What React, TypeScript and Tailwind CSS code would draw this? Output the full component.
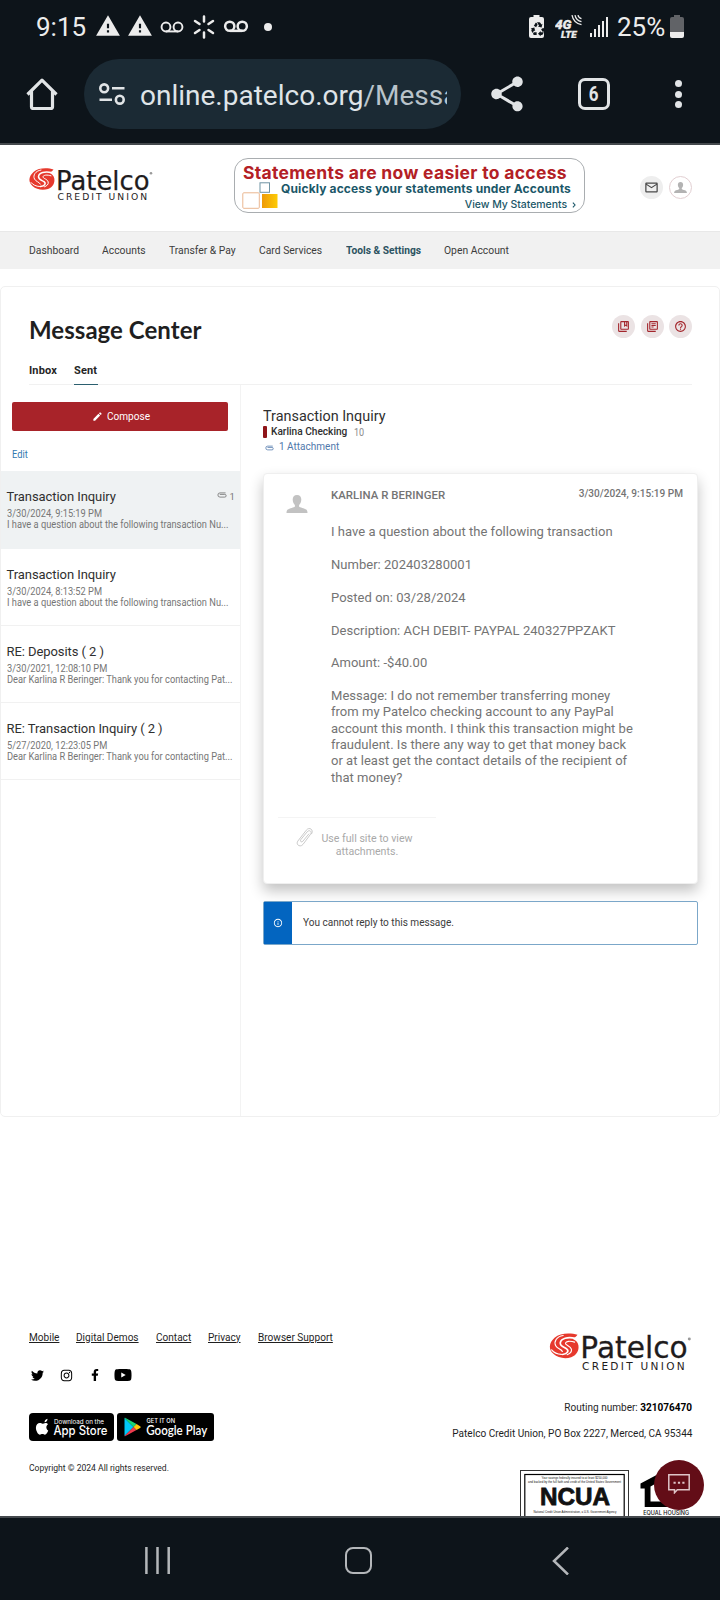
import React from 'react';
import { MdMailOutline, MdOutlineCollectionsBookmark, MdOutlineLibraryBooks, MdHelpOutline, MdInfoOutline, MdShare, MdWarning, MdEdit, MdRecycling } from 'react-icons/md';
import { FaTwitter, FaInstagram, FaFacebookF, FaYoutube } from 'react-icons/fa';

function Person({ className }: { className: string }) {
  return (
    <svg viewBox="0 0 21 18" className={className} fill="currentColor">
      <path d="M10.5 0C7.6 0 6.2 2 6.2 4.6c0 2.3 1 4.4 2.2 5.3v1.6C7.9 12.6 3 13.2 1.2 14.6.3 15.3 0 16.6 0 18h21c0-1.4-.3-2.7-1.2-3.4-1.8-1.4-6.7-2-7.2-3.1V9.9c1.200-.9 2.200-3 2.200-5.300C14.800 2 13.400 0 10.500 0z" />
    </svg>
  );
}

function Clip({ className }: { className: string }) {
  return (
    <svg viewBox="0 0 10 6" className={className} fill="none" stroke="currentColor" strokeWidth="0.85" strokeLinecap="round">
      <path d="M8.200.9H3a2.100 2.100 0 0 0 0 4.200h4.800a1.350 1.350 0 0 0 0-2.700H3.200" />
    </svg>
  );
}

function PatelcoLogo({ className }: { className: string }) {
  return (
    <svg viewBox="0 0 124 34" className={className} overflow="visible">
      <path d="M24.500 2.500C19 .8 9.500.5 4.500 5-1 10-.5 15.500 3.500 19c4 3.600 10 4.800 15.500 3 5-2 7-6 6.300-10.500-.5-3-2.600-4.500-4.800-5.500 1.500-.8 3-2 4-3.500z" fill="#e6392d" />
      <g fill="none" stroke="#fff" strokeLinecap="round">
        <path d="M22.500 5.500C16 4 10 5.500 9.500 9.500c-.3 3 3.500 3.700 5.500 5.200 2.200 1.700 1 4.300-3.500 4.900" strokeWidth="1.500" />
        <path d="M22 8.800c-4-1.300-7.500-.8-8 .9-.4 1.700 4.500 2.300 5.200 5.300.5 2.400-1.400 4-3.700 4.800" strokeWidth="1" />
        <path d="M12 3C6 4 3.800 8.500 5.500 12c1.400 2.800 5 3 5.800 5" strokeWidth="1" />
        <path d="M2 15.500c2 2.500 5 3.800 8.500 4" strokeWidth="1" />
      </g>
      <text x="27" y="22.500" fontSize="26.500" textLength="93.500" lengthAdjust="spacingAndGlyphs" fontFamily="DejaVu Sans, sans-serif" fill="#1f1c1d" stroke="#1f1c1d" strokeWidth=".25">Patelco</text>
      <text x="28.500" y="32.800" fontSize="9.200" textLength="89.500" lengthAdjust="spacing" fontFamily="DejaVu Sans, sans-serif" fill="#1f1c1d">CREDIT UNION</text>
      <circle cx="122" cy="6.200" r="1.300" fill="#999" />
    </svg>
  );
}

function Voicemail({ className, w }: { className: string; w: number }) {
  return (
    <svg viewBox="0 0 26 13" className={className} fill="none" stroke="#ececec" strokeWidth={w}>
      <circle cx="6.500" cy="6.500" r="4.800" />
      <circle cx="19.500" cy="6.500" r="4.800" />
      <path d="M6.500 11.300h13" />
    </svg>
  );
}

function StatusBar() {
  return (
    <div className="flex h-[52px] items-center pt-px pl-[36px] pr-[36px] text-[#ececec]">
      <span className="w-[59px] text-[26px] leading-none">9:15</span>
      <MdWarning className="mr-[6px] size-[26px] -translate-y-px" />
      <MdWarning className="mr-[6px] size-[26px] -translate-y-px" />
      <Voicemail className="mr-[9px] ml-px h-[12px] w-[24px]" w={2.1} />
      <svg viewBox="0 0 22 24" className="mr-[8px] h-[24px] w-[22px]" stroke="#ececec" strokeWidth="2.500" strokeLinecap="round">
        <path d="M11 1.500v5M11 17.500v5M2 6l4.500 3M15.500 15l4.500 3M20 6l-4.500 3M6.500 15L2 18" />
      </svg>
      <Voicemail className="h-[12.500px] w-[26px]" w={2.6} />
      <span className="ml-[15px] size-[8px] rounded-full bg-[#ececec]" />
      <span className="grow" />
      <svg viewBox="0 0 15 23" className="h-[23px] w-[15px]" fill="#ececec">
        <path d="M4.500 0h6v2H13a2 2 0 0 1 2 2v17a2 2 0 0 1-2 2H2a2 2 0 0 1-2-2V4a2 2 0 0 1 2-2h2.500z" />
        <MdRecycling x="1" y="6" width="13" height="13" color="#0d141a" />
      </svg>
      <svg viewBox="0 0 28 24" className="mr-px ml-[11px] h-[24px] w-[28px] -translate-y-px" fill="#ececec" stroke="#ececec" strokeWidth=".3">
        <text x="0" y="15" fontSize="12.500" fontWeight="900" fontStyle="italic" fontFamily="Roboto, sans-serif" textLength="16.500" lengthAdjust="spacingAndGlyphs">4G</text>
        <text x="6" y="23.500" fontSize="9" fontWeight="900" fontStyle="italic" fontFamily="Roboto, sans-serif" textLength="15.500" lengthAdjust="spacingAndGlyphs">LTE</text>
        <g fill="none" stroke="#ececec" strokeWidth="1.300">
          <path d="M17 1.200q1.500 8 9.500 9.500M20 1.200q1 5.500 6.500 6.500M23 1.200q.6 2.800 3.500 3.500" />
        </g>
      </svg>
      <svg viewBox="0 0 18 20" className="ml-[6px] h-[20px] w-[18px]" fill="#ececec">
        <path d="M0 16h2v4H0zM4 12h2v8H4zM8 8h2v12H8zM12 4h2v16h-2zM16 0h2v20h-2z" />
      </svg>
      <span className="ml-[9px] w-[53px] text-[26px] leading-none">25%</span>
      <svg viewBox="0 0 14 23" className="h-[23px] w-[14px]">
        <path d="M4 0h6v2h2a2 2 0 0 1 2 2v13H0V4a2 2 0 0 1 2-2h2z" fill="#616367" />
        <path d="M0 17h14v4a2 2 0 0 1-2 2H2a2 2 0 0 1-2-2z" fill="#ececec" />
      </svg>
    </div>
  );
}

function Toolbar() {
  return (
    <div className="flex h-[91px] items-center pr-[36px] pb-[7px] pl-[26px] text-[#e1e4e6]">
      <svg viewBox="0 0 32 32" className="h-[32px] w-[32px]" fill="none" stroke="currentColor" strokeWidth="3.200" strokeLinejoin="round">
        <path d="M1.500 16.500L16 2.200l14.500 14.300M5.500 13.500V29a1.500 1.500 0 0 0 1.500 1.500h18a1.500 1.500 0 0 0 1.500-1.500V13.500" />
      </svg>
      <div className="ml-[26px] flex h-[70px] w-[377px] items-center rounded-full bg-[#1b2a34] pl-[15px]">
        <svg viewBox="0 0 26 22" className="h-[22px] w-[26px]" fill="none" stroke="currentColor" strokeWidth="2.600">
          <circle cx="5.200" cy="5.300" r="3.900" />
          <circle cx="20.800" cy="16.700" r="3.900" />
          <path d="M13 5.300h12.500M.5 16.700H13" />
        </svg>
        <div className="mt-[3px] ml-[15px] w-[307px] overflow-hidden whitespace-nowrap text-[28px] leading-[36px] text-[#dfe4e8]">
          online.patelco.org<span className="text-[#b9c3ca]">/Message</span>
        </div>
      </div>
      <MdShare className="ml-[25px] size-[42px]" />
      <div className="ml-[50px] flex size-[32px] items-center justify-center rounded-[7px] border-[3px] border-current text-[20px] font-bold">
        <span className="scale-x-[0.85]">6</span>
      </div>
      <div className="ml-auto mr-[2px] flex flex-col gap-[3.500px]">
        <span className="size-[7px] rounded-full bg-current" />
        <span className="size-[7px] rounded-full bg-current" />
        <span className="size-[7px] rounded-full bg-current" />
      </div>
    </div>
  );
}

function Banner() {
  return (
    <div className="mt-[13px] ml-[81px] flex h-[55px] w-[351px] flex-col rounded-[14px] border border-[#a9adb0] font-['Inter'] whitespace-nowrap">
      <div className="mt-[4px] ml-[8px] text-[17.500px] leading-[19px] font-bold tracking-[0.31px] text-[#b32025]">Statements are now easier to access</div>
      <div className="flex">
        <svg viewBox="0 0 36 28" className="ml-[7px] h-[28px] w-[36px]">
          <rect x="18" y=".8" width="9.500" height="9.500" fill="#fff" stroke="#6f93a3" />
          <rect x=".8" y="10.800" width="16.500" height="15.500" rx="1" fill="#fff" stroke="#eab791" />
          <defs>
            <linearGradient id="gold">
              <stop offset="0" stopColor="#ee9a08" />
              <stop offset="1" stopColor="#fdcb06" />
            </linearGradient>
          </defs>
          <rect x="20" y="12" width="15.500" height="14" fill="url(#gold)" />
        </svg>
        <div className="flex w-[294px] flex-col text-[#1b5768]">
          <div className="ml-[3px] text-[12px] leading-[14px] font-bold tracking-[0.13px]">Quickly access your statements under Accounts</div>
          <div className="mt-[2px] flex items-center justify-end text-[10.500px] leading-[14px] font-medium tracking-[-0.05px]">
            View My Statements
            <svg viewBox="0 0 4 7" className="mr-[-4px] ml-[5px] h-[6px] w-[4px]" fill="none" stroke="currentColor" strokeWidth="1.300"><path d="M.7.7l2.500 2.800L.7 6.300" /></svg>
          </div>
        </div>
      </div>
    </div>
  );
}

function Header() {
  return (
    <div className="flex h-[86px] shrink-0 items-start">
      <PatelcoLogo className="mt-[22px] ml-[29px] h-[34px] w-[124px] shrink-0" />
      <Banner />
      <div className="mt-[31px] ml-[55px] flex gap-[6px]">
        <div className="flex size-[23px] items-center justify-center rounded-full bg-[#eeeeee]"><MdMailOutline className="size-[15px] text-[#4a4a4a]" /></div>
        <div className="flex size-[23px] items-center justify-center rounded-full border border-[#e2cfd2]"><Person className="h-[11px] w-[13px] text-[#b3b3b3]" /></div>
      </div>
    </div>
  );
}

function Nav() {
  const cell = 'origin-left scale-x-[0.94]';
  return (
    <div className="flex h-[38px] shrink-0 items-center border-t border-[#e8e8e8] bg-[#f1f1f1] pt-[2px] pl-[29px] text-[11px] whitespace-nowrap text-[#3c3c3c]">
      <div className="w-[73px]"><div className={cell}>Dashboard</div></div>
      <div className="w-[67px]"><div className={cell}>Accounts</div></div>
      <div className="w-[90px]"><div className={cell}>Transfer &amp; Pay</div></div>
      <div className="w-[87px]"><div className={cell}>Card Services</div></div>
      <div className="w-[98px] text-[#2c5361]"><div className="origin-left scale-x-[0.93] font-bold">Tools &amp; Settings</div></div>
      <div className="w-[80px]"><div className={cell}>Open Account</div></div>
    </div>
  );
}

type Item = { title: string; date: string; preview: string; files?: number; active?: boolean };
const items: Item[] = [
  { title: 'Transaction Inquiry', date: '3/30/2024, 9:15:19 PM', preview: 'I have a question about the following transaction Nu...', files: 1, active: true },
  { title: 'Transaction Inquiry', date: '3/30/2024, 8:13:52 PM', preview: 'I have a question about the following transaction Nu...' },
  { title: 'RE: Deposits ( 2 )', date: '3/30/2021, 12:08:10 PM', preview: 'Dear Karlina R Beringer: Thank you for contacting Pat...' },
  { title: 'RE: Transaction Inquiry ( 2 )', date: '5/27/2020, 12:23:05 PM', preview: 'Dear Karlina R Beringer: Thank you for contacting Pat...' },
];

function MessageList() {
  return (
    <div className="w-[240px] shrink-0 border-r border-[#f3f3f3]">
      <button className="mt-[17px] ml-[11px] flex h-[29px] w-[216px] items-center justify-center rounded-[2px] bg-[#a82329] text-white">
        <MdEdit className="mr-[4px] size-[11px]" />
        <span className="mt-px w-[42px] text-left"><span className="block origin-left scale-x-[0.915] text-[11px]">Compose</span></span>
      </button>
      <div className="mt-[16px] ml-[11px] h-[24px] origin-left scale-x-[0.93] text-[10px] leading-[16px] text-[#3379b0]">Edit</div>
      {items.map((m, i) => (
        <div key={i} className={m.active ? 'h-[78px] bg-[#eff2f3] pt-[17px] pl-[5.500px] whitespace-nowrap' : 'h-[77px] border-b border-[#f1f1f1] pt-[17px] pl-[5.500px] whitespace-nowrap'}>
          <div className="flex h-[17px] items-center">
            <span className="w-[210px] text-[13px] leading-[17px] tracking-[-0.07px] text-[#2f2f2f]">{m.title}</span>
            {m.files && <Clip className="-mt-[3px] h-[6px] w-[10px] text-[#777]" />}
            {m.files && <span className="mt-[2px] ml-[3px] text-[9.500px] text-[#777]">{m.files}</span>}
          </div>
          <div className="mt-[3px] origin-left scale-x-[0.927] text-[10px] leading-[11px] text-[#767676]">{m.date}</div>
          <div className="origin-left scale-x-[0.927] text-[10px] leading-[12px] text-[#767676]">{m.preview}</div>
        </div>
      ))}
    </div>
  );
}

function Detail() {
  return (
    <div className="ml-[22px] w-[435px] whitespace-nowrap">
      <div className="mt-[22px] origin-left scale-x-[0.96] text-[15px] leading-[18px] text-[#2f2f2f]">Transaction Inquiry</div>
      <div className="mt-px flex h-[13px] items-center text-[11px]">
        <span className="-mt-px h-[12px] w-[4px] rounded-[1px] bg-[#8f1519]" />
        <span className="ml-[3.500px] w-[83px]"><span className="block origin-left scale-x-[0.92] font-medium text-[#2f2f2f]">Karlina Checking</span></span>
        <span className="origin-left scale-x-[0.86] text-[10.500px] text-[#8a8a8a]">10</span>
      </div>
      <div className="mt-px flex h-[15px] items-center text-[11px] text-[#5078ab]">
        <Clip className="mt-px ml-[2px] h-[6px] w-[9px]" />
        <span className="ml-[5px] origin-left scale-x-[0.91]">1 Attachment</span>
      </div>
      <div className="mt-[18px] flex h-[411px] flex-col rounded-[4px] border border-[#efefef] bg-white text-[#747474] shadow-[0_7px_14px_rgba(0,0,0,0.24)]">
        <div className="flex h-[27px]">
          <Person className="mt-[21px] ml-[22px] h-[18px] w-[22px] shrink-0 text-[#c2c2c2]" />
          <div className="ml-[23px] w-[205px]">
            <div className="mt-[14px] text-[11.400px] leading-[14px] font-medium tracking-[0.05px]">KARLINA R BERINGER</div>
          </div>
          <div className="mt-[13px] ml-auto mr-[14px] origin-right scale-x-[0.915] text-[11px] leading-[14px] font-medium">3/30/2024, 9:15:19 PM</div>
        </div>
        <div className="mt-[23px] ml-[67px] text-[13px] leading-[16.400px] tracking-[0.026px] whitespace-pre">
          <p>I have a question about the following transaction</p>
          <p className="mt-[16.400px]">Number: 202403280001</p>
          <p className="mt-[16.400px]">Posted on: 03/28/2024</p>
          <p className="mt-[16.600px]">Description: ACH DEBIT- PAYPAL 240327PPZAKT</p>
          <p className="mt-[16.200px]">Amount: -$40.00</p>
          <p className="mt-[16.200px]">{'Message: I do not remember transferring money\nfrom my Patelco checking account to any PayPal\naccount this month. I think this transaction might be\nfraudulent. Is there any way to get that money back\nor at least get the contact details of the recipient of\nthat money?'}</p>
        </div>
        <div className="mt-[31px] ml-[14px] flex w-[158px] border-t border-[#f4f4f4] text-[#a9a9a9]">
          <svg viewBox="0 0 17 21" className="mt-[9px] ml-[18px] h-[21px] w-[17px] shrink-0" fill="none" stroke="#c4c4c4" strokeWidth=".9" strokeLinecap="round">
            <path d="M12.800 7L6.800 14.300c-1.200 1.400-3.200 0-2-1.700L11.200 4.800c2.200-2.500 5.200-.2 3.400 2.400L7 17.400c-2.600 3.400-7.600.4-5.200-3.300L10.300 3.200C13.300-.6 18.200 2.700 15.600 6.800" />
          </svg>
          <div className="mt-[14px] ml-[8px] w-[92px] text-center text-[11px] leading-[13px]">
            <div className="-mx-2 scale-x-[0.965]">Use full site to view<br />attachments.</div>
          </div>
        </div>
      </div>
      <div className="mt-[17px] flex h-[44px] w-[435px] items-stretch rounded-[2px] border border-[#7ba7c9]">
        <div className="flex w-[28px] items-center justify-center bg-[#0365c0]"><MdInfoOutline className="size-[10px] text-white" /></div>
        <div className="flex items-center pl-[11px] text-[11px] text-[#3c3c3c]"><span className="origin-left scale-x-[0.915]">You cannot reply to this message.</span></div>
      </div>
    </div>
  );
}

function RoundIcon({ children }: { children: React.ReactNode }) {
  return <div className="flex size-[23px] items-center justify-center rounded-full bg-[#ebe3e4] text-[#a3262c]">{children}</div>;
}

function MessageCenter() {
  return (
    <div className="mt-[17px] h-[831px] shrink-0 rounded-[5px] border border-[#f0f0f0]">
      <div className="flex h-[74px] justify-between pr-[27px] pl-[28px]">
        <h1 className="mt-[28px] font-['Lato'] text-[24px] leading-[30px] font-bold tracking-[0.04px] text-[#1f1f1f]">Message Center</h1>
        <div className="mt-[28px] flex gap-[5.500px]">
          <RoundIcon><MdOutlineCollectionsBookmark className="size-[13px]" /></RoundIcon>
          <RoundIcon><MdOutlineLibraryBooks className="size-[13px]" /></RoundIcon>
          <RoundIcon><MdHelpOutline className="size-[13px]" /></RoundIcon>
        </div>
      </div>
      <div className="mr-[27px] ml-[28px] flex h-[24px] gap-[17px] border-b border-[#f1f1f1] text-[11px] leading-[20px] font-bold tracking-[0.15px] text-[#252525]">
        <span className="h-[24px] w-[28px]">Inbox</span>
        <span className="h-[24px] w-[24px] border-b border-[#2b5f6f]">Sent</span>
      </div>
      <div className="flex h-[731px]">
        <MessageList />
        <Detail />
      </div>
    </div>
  );
}

function AppStore() {
  return (
    <svg viewBox="0 0 85 28" className="h-[28px] w-[85px]" fontFamily="Inter, sans-serif" fill="#fff">
      <rect width="85" height="28" rx="4" fill="#000" />
      <path d="M15.600 9.300c-.2-1.800 1.300-3.300 2.900-3.600.2 1.900-1.300 3.500-2.900 3.600zM19.200 17.500c-.6 1.800-1.900 4.200-3.300 4.200-1 0-1.300-.6-2.500-.6s-1.600.6-2.500.6c-1.700 0-4-3.800-4-7 0-3 1.900-4.700 3.900-4.700 1.100 0 2 .7 2.700.7.700 0 1.700-.8 3-.8 1 0 2 .5 2.600 1.400-2.500 1.400-2.100 5 .1 6.200z" />
      <text x="25" y="10.500" fontSize="6" textLength="50" lengthAdjust="spacingAndGlyphs">Download on the</text>
      <text x="24.500" y="22" fontSize="12.500" fontWeight="500" textLength="54" lengthAdjust="spacingAndGlyphs">App Store</text>
    </svg>
  );
}

function GooglePlay() {
  return (
    <svg viewBox="0 0 97 28" className="h-[28px] w-[97px]" fontFamily="Inter, sans-serif" fill="#fff">
      <rect width="97" height="28" rx="3" fill="#000" />
      <path d="M7.500 5v18l9-9z" fill="#00c8f8" />
      <path d="M7.500 5c.8-.4 1 0 1.500.2l10.500 5.900-3 2.900z" fill="#18d677" />
      <path d="M7.500 23c.8.400 1 0 1.500-.2l10.500-5.900-3-2.900z" fill="#ee3b4e" />
      <path d="M19.500 11.100l3.600 2.100c.8.500.8 1.200 0 1.700l-3.600 2L16.500 14z" fill="#fdc80c" />
      <text x="29.500" y="9.500" fontSize="6.300" fontWeight="500" textLength="28.500" lengthAdjust="spacingAndGlyphs">GET IT ON</text>
      <text x="29.200" y="21.500" fontSize="12.500" fontFamily="Lato, sans-serif" fontWeight="600" textLength="61" lengthAdjust="spacingAndGlyphs">Google Play</text>
    </svg>
  );
}

function Ncua() {
  return (
    <svg viewBox="0 0 109 60" className="h-[60px] w-[109px]" fontFamily="Liberation Sans, sans-serif" fill="#111">
      <rect x=".5" y=".5" width="108" height="70" fill="#fff" stroke="#333" />
      <rect x="4.800" y="4.500" width="99.400" height="62" fill="#fff" stroke="#000" strokeWidth="1.200" />
      <text x="21.500" y="9.200" fontSize="3.400" textLength="66" lengthAdjust="spacingAndGlyphs">Your savings federally insured to at least $250,000</text>
      <text x="8" y="13" fontSize="3.400" textLength="93" lengthAdjust="spacingAndGlyphs">and backed by the full faith and credit of the United States Government</text>
      <text x="20" y="35.300" fontSize="24" fontWeight="bold" textLength="70" lengthAdjust="spacingAndGlyphs" stroke="#111" strokeWidth=".8">NCUA</text>
      <text x="13.500" y="43.200" fontSize="3.400" textLength="83" lengthAdjust="spacingAndGlyphs">National Credit Union Administration, a U.S. Government Agency</text>
    </svg>
  );
}

function EqualHousing() {
  return (
    <svg viewBox="0 0 52 50" className="h-[50px] w-[52px]">
      <path d="M26 0L.5 13.500v5h4.200V37H47.500V18.500h4.200v-5zM26 8l15.500 8.500v15h-31v-15z" fill="#000" fillRule="evenodd" />
      <text x="3.200" y="44.800" fontSize="6" fontWeight="500" textLength="46" lengthAdjust="spacingAndGlyphs" fontFamily="Inter, sans-serif" fill="#111">EQUAL HOUSING</text>
    </svg>
  );
}

function Footer() {
  const link = 'origin-left scale-x-[0.915] underline underline-offset-[1px]';
  return (
    <div className="relative mt-[211px] flex min-h-0 flex-1 items-start justify-between overflow-hidden pr-[28px] pl-[29px] text-[11px] whitespace-nowrap text-[#1f1f1f]">
      <div>
        <div className="flex h-[20px] items-center">
          <div className="w-[47px]"><div className={link}>Mobile</div></div>
          <div className="w-[80px]"><div className={link}>Digital Demos</div></div>
          <div className="w-[52px]"><div className={link}>Contact</div></div>
          <div className="w-[50px]"><div className={link}>Privacy</div></div>
          <div className="w-[82px]"><div className={link}>Browser Support</div></div>
        </div>
        <div className="mt-[17px] flex h-[20px] items-center text-black">
          <FaTwitter className="ml-[2px] size-[13px]" />
          <FaInstagram className="ml-[16px] size-[13px]" />
          <FaFacebookF className="ml-[16px] size-[12px]" />
          <FaYoutube className="ml-[13px] size-[18px]" />
        </div>
        <div className="mt-[28px] flex gap-[3px]">
          <AppStore />
          <GooglePlay />
        </div>
        <div className="mt-[20px] origin-left scale-x-[0.903] text-[9.500px] leading-[14px]">Copyright © 2024 All rights reserved.</div>
      </div>
      <div className="flex flex-col items-end">
        <PatelcoLogo className="mt-[4px] h-[39px] w-[143px]" />
        <div className="mt-[29px] origin-right scale-x-[0.912] leading-[16px]">Routing number: <span className="font-bold text-black">321076470</span></div>
        <div className="mt-[10px] origin-right scale-x-[0.915] leading-[16px]">Patelco Credit Union, PO Box 2227, Merced, CA 95344</div>
        <div className="mt-[28px] flex gap-[11px]">
          <Ncua />
          <EqualHousing />
        </div>
      </div>
      <div className="absolute top-[132px] left-[654px] flex size-[50px] items-center justify-center rounded-full bg-[#630d17]">
        <svg viewBox="0 0 22 20" className="mt-[-2px] h-[20px] w-[22px]" fill="none" stroke="#dfc5c8" strokeWidth="1.500">
          <path d="M.8.800h20.400v15H9.300l-2.800 3v-3H.8z" />
          <path d="M5.500 8.800h2.200M9.900 8.800h2.200M14.300 8.800h2.200" strokeWidth="2.100" />
        </svg>
      </div>
    </div>
  );
}

export default function App() {
  return (
    <div className="flex h-[1600px] w-[720px] flex-col overflow-hidden bg-white font-['Roboto',sans-serif]">
      <div className="h-[145px] shrink-0 border-b-2 border-[#44494d] bg-[#0d141a]">
        <StatusBar />
        <Toolbar />
      </div>
      <div className="flex min-h-0 flex-1 flex-col">
        <Header />
        <Nav />
        <MessageCenter />
        <Footer />
      </div>
      <div className="flex h-[84px] shrink-0 border-t-2 border-[#44494d] bg-[#0d141a] pt-[29px] text-[#b4b7ba]">
        <svg viewBox="0 0 26 27" className="ml-[145px] h-[27px] w-[26px]" stroke="currentColor" strokeWidth="2.500">
          <path d="M1.400 0v27M12.500 0v27M23.700 0v27" />
        </svg>
        <div className="ml-[174px] h-[27px] w-[27px] rounded-[8px] border-[2.500px] border-current" />
        <svg viewBox="0 0 17 28" className="ml-[180px] h-[28px] w-[17px]" fill="none" stroke="currentColor" strokeWidth="2.500">
          <path d="M16 .5L2 14l14 13.500" />
        </svg>
      </div>
    </div>
  );
}
